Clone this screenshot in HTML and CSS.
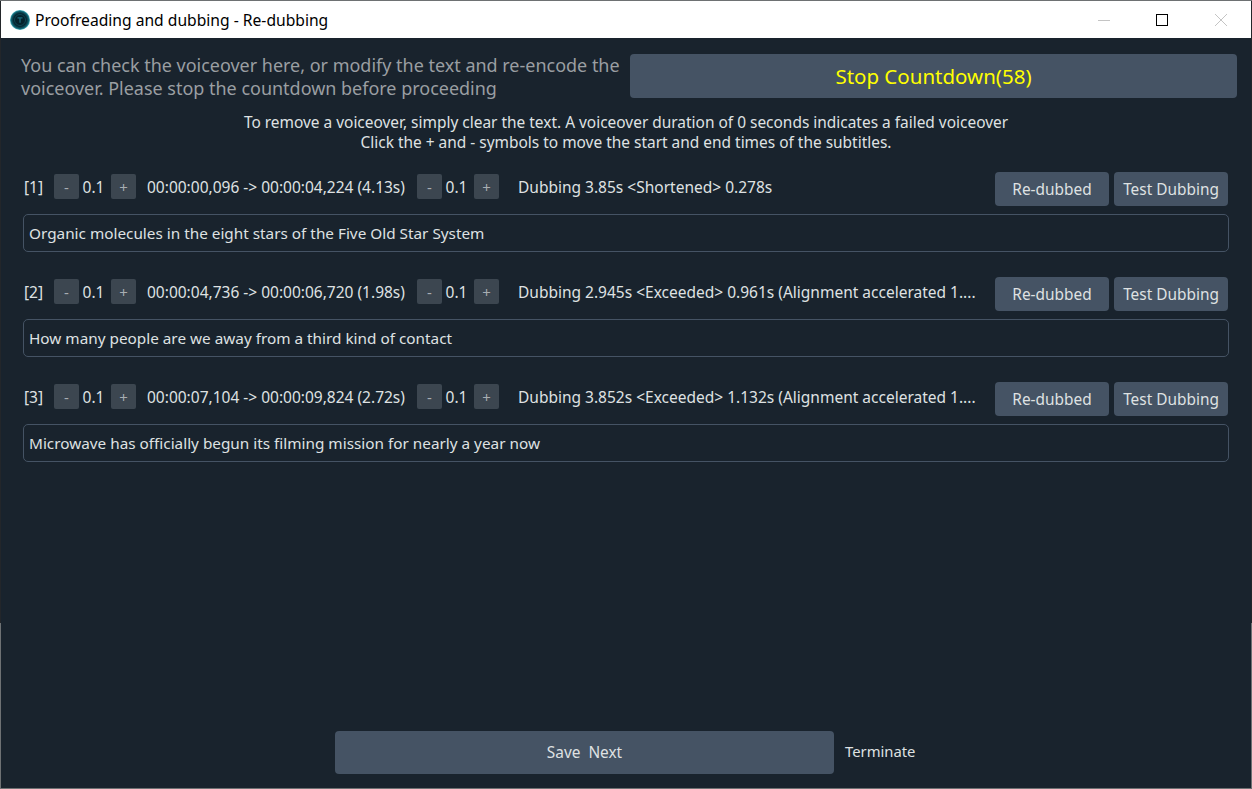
FILE: index.html
```html
<!DOCTYPE html>
<html lang="en">
<head>
    <meta charset="UTF-8">
    <meta name="viewport" content="width=device-width, initial-scale=1.0">
    <title>Proofreading and dubbing - Re-dubbing</title>
    <link rel="stylesheet" href="styles.css">
</head>
<body>
    <div class="window">
        <div class="titleBar">
            <svg class="appIcon" width="20" height="20" viewBox="0 0 20 20">
                <defs>
                    <radialGradient id="iconRim" cx="50%" cy="50%" r="50%">
                        <stop offset="0%" stop-color="#04222c"/>
                        <stop offset="62%" stop-color="#04222c"/>
                        <stop offset="85%" stop-color="#0f5c6b"/>
                        <stop offset="100%" stop-color="#43b5c2"/>
                    </radialGradient>
                </defs>
                <circle cx="10" cy="10" r="10" fill="url(#iconRim)"/>
                <circle cx="10" cy="10" r="5.5" fill="none" stroke="#0e4553" stroke-width="1"/>
                <path d="M7.5 7.8h5M10 7.8v5" stroke="#1a6c7c" stroke-width="1.3" fill="none"/>
            </svg>
            <span class="titleText">Proofreading and dubbing - Re-dubbing</span>
            <div class="winBtns">
                <svg class="winBtn" width="12" height="12" viewBox="0 0 12 12"><path d="M0 6.5h12" stroke="#c4c4c4" stroke-width="1"/></svg>
                <svg class="winBtn" width="12" height="12" viewBox="0 0 12 12"><rect x="0.5" y="0.5" width="11" height="11" fill="none" stroke="#000" stroke-width="1"/></svg>
                <svg class="winBtn closeBtn" width="12" height="12" viewBox="0 0 12 12"><path d="M0 0l12 12M12 0L0 12" stroke="#c4c4c4" stroke-width="1"/></svg>
            </div>
        </div>

        <div class="main">
            <div class="topRow">
                <p class="notice">You can check the voiceover here, or modify the text and re-encode the voiceover. Please stop the countdown before proceeding</p>
                <button class="stopBtn">Stop Countdown(58)</button>
            </div>
            <p class="hint">To remove a voiceover, simply clear the text. A voiceover duration of 0 seconds indicates a failed voiceover<br>Click the + and - symbols to move the start and end times of the subtitles.</p>

            <div class="items">
                <div class="item">
                    <div class="line">
                        <span class="num">[1]</span>
                        <button class="step">-</button><span class="val">0.1</span><button class="step">+</button>
                        <span class="time">00:00:00,096 -&gt; 00:00:04,224 (4.13s)</span>
                        <button class="step">-</button><span class="val">0.1</span><button class="step">+</button>
                        <span class="info">Dubbing 3.85s &lt;Shortened&gt; 0.278s</span>
                        <button class="act redub">Re-dubbed</button>
                        <button class="act test">Test Dubbing</button>
                    </div>
                    <div class="textBox">Organic molecules in the eight stars of the Five Old Star System</div>
                </div>
                <div class="item">
                    <div class="line">
                        <span class="num">[2]</span>
                        <button class="step">-</button><span class="val">0.1</span><button class="step">+</button>
                        <span class="time">00:00:04,736 -&gt; 00:00:06,720 (1.98s)</span>
                        <button class="step">-</button><span class="val">0.1</span><button class="step">+</button>
                        <span class="info">Dubbing 2.945s &lt;Exceeded&gt; 0.961s (Alignment accelerated 1....</span>
                        <button class="act redub">Re-dubbed</button>
                        <button class="act test">Test Dubbing</button>
                    </div>
                    <div class="textBox">How many people are we away from a third kind of contact</div>
                </div>
                <div class="item">
                    <div class="line">
                        <span class="num">[3]</span>
                        <button class="step">-</button><span class="val">0.1</span><button class="step">+</button>
                        <span class="time">00:00:07,104 -&gt; 00:00:09,824 (2.72s)</span>
                        <button class="step">-</button><span class="val">0.1</span><button class="step">+</button>
                        <span class="info">Dubbing 3.852s &lt;Exceeded&gt; 1.132s (Alignment accelerated 1....</span>
                        <button class="act redub">Re-dubbed</button>
                        <button class="act test">Test Dubbing</button>
                    </div>
                    <div class="textBox">Microwave has officially begun its filming mission for nearly a year now</div>
                </div>
            </div>

            <div class="bottomRow">
                <button class="saveBtn">Save&nbsp; Next</button>
                <span class="terminate">Terminate</span>
            </div>
        </div>
    </div>
</body>
</html>
```

FILE: styles.css
```css
*{
    margin: 0;
    padding: 0;
    box-sizing: border-box;
}
html, body{
    height: 100%;
    overflow: hidden;
}
body{
    font-family: "Noto Sans", "Open Sans", sans-serif;
    font-size: 15.5px;
    color: #dfe1e2;
    background-color: #19232d;
}
button{
    font-family: inherit;
    border: none;
}
.window{
    height: 789px;
    display: flex;
    flex-direction: column;
    padding: 0 1px;
    border-top: 1px solid #6e7173;
    border-bottom: 1px solid #6e7173;
    background: linear-gradient(to bottom, #23262a 622px, #6e7173 622px);
}
.titleBar{
    height: 37px;
    flex: none;
    background-color: #fff;
    display: flex;
    align-items: center;
    padding-left: 9px;
    color: #000;
}
.appIcon{
    margin-right: 5px;
}
.titleText{
    font-size: 15.65px;
}
.winBtns{
    margin-left: auto;
    display: flex;
    gap: 46px;
    padding-right: 24px;
}
.closeBtn{
    margin-left: 1px;
}
.main{
    flex: 1;
    display: flex;
    flex-direction: column;
    padding: 16px 14px 14px 20px;
    background-color: #19232d;
}
.topRow{
    display: flex;
    gap: 10px;
    height: 44px;
}
.notice{
    width: 599px;
    flex: none;
    font-size: 17.98px;
    line-height: 23px;
    color: #9a9ea2;
}
.stopBtn{
    flex: 1;
    background-color: #455364;
    border-radius: 4px;
    color: #ffff00;
    font-size: 20.5px;
}
.hint{
    margin-top: 14px;
    margin-bottom: -1px;
    text-align: center;
    line-height: 20px;
    font-size: 15.45px;
    padding-right: 6px;
}
.items{
    margin-top: 21px;
    padding-left: 2px;
    padding-right: 8px;
    display: flex;
    flex-direction: column;
    gap: 25px;
}
.line{
    height: 34px;
    display: flex;
    align-items: flex-start;
    margin-bottom: 8px;
    white-space: nowrap;
}
.num{
    width: 31px;
    padding-left: 1px;
    line-height: 30px;
}
.step{
    width: 25px;
    height: 25px;
    margin-top: 2px;
    background-color: #3c4650;
    color: #a8adb2;
    font-size: 15px;
    border-radius: 2px;
}
.val{
    width: 32px;
    padding-right: 3px;
    text-align: center;
    line-height: 30px;
}
.time{
    width: 281px;
    padding-left: 11px;
    line-height: 30px;
}
.info{
    flex: 1;
    padding-left: 19px;
    line-height: 30px;
    overflow: hidden;
}
.act{
    height: 34px;
    background-color: #455364;
    border-radius: 4px;
    color: #dfe1e2;
    font-size: 15.4px;
}
.redub{
    width: 114px;
    margin-right: 5px;
}
.test{
    width: 114px;
    margin-right: 1px;
}
.textBox{
    height: 38px;
    border: 1px solid #455364;
    border-radius: 5px;
    padding-left: 5px;
    line-height: 37px;
    font-size: 15.32px;
}
.bottomRow{
    margin-top: auto;
    display: flex;
    align-items: center;
    padding-left: 314px;
}
.saveBtn{
    width: 499px;
    height: 43px;
    background-color: #455364;
    border-radius: 4px;
    color: #dfe1e2;
    font-size: 15.4px;
}
.terminate{
    margin-left: 11px;
    font-size: 14.8px;
    position: relative;
    top: -2px;
}
```
